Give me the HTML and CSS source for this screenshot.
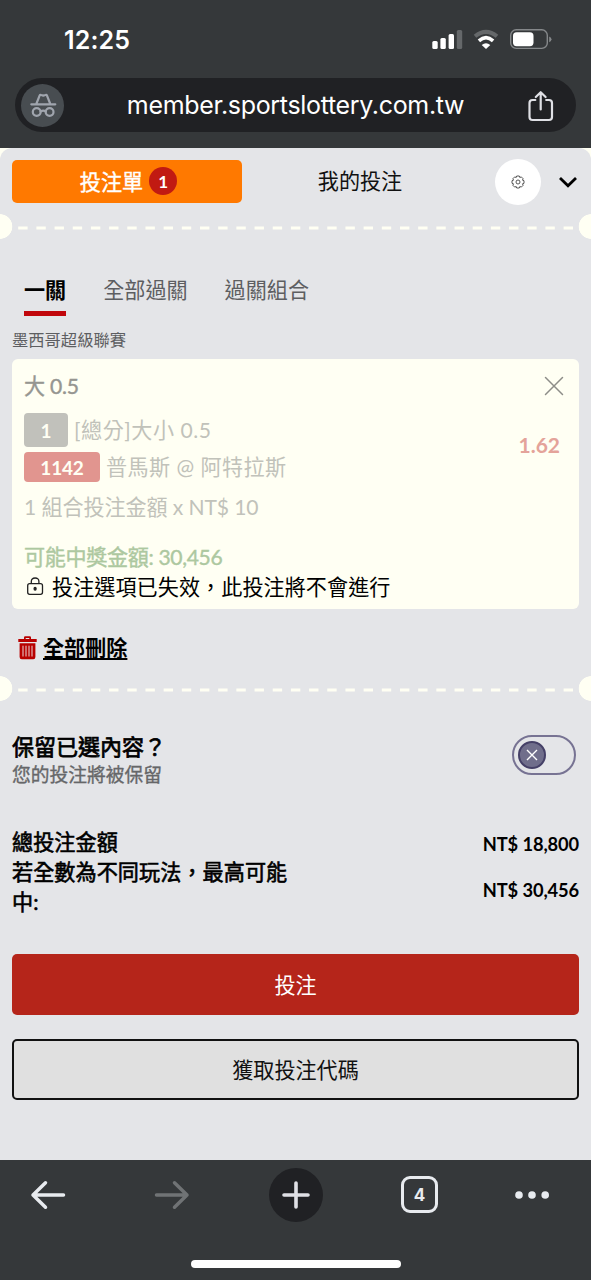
FILE: index.html
```html
<!DOCTYPE html>
<html lang="zh-Hant">
<head>
<meta charset="utf-8">
<title>投注單</title>
<link rel="stylesheet" href="styles.css">
</head>
<body>
<header class="browser-top">
  <div class="status">
    <span class="clock">12:25</span>
    <svg class="status-icons" width="120" height="22" viewBox="432 29 120 22">
      <g fill="#fff"><rect x="432.3" y="41" width="5.4" height="8" rx="1.5"/><rect x="440.4" y="38" width="5.4" height="11" rx="1.5"/><rect x="448.6" y="34" width="5.4" height="15" rx="1.5"/><rect x="456.8" y="30" width="5.4" height="19" rx="1.5" fill="#65686a"/></g>
      <path d="M475 36.3Q486 27.5 497 36.3" fill="none" stroke="#65686a" stroke-width="4"/>
      <path d="M478.9 40.8Q486 34.6 493.1 40.8" fill="none" stroke="#fff" stroke-width="3.6"/>
      <path d="M481.7 45Q486 41.4 490.3 45L486 49z" fill="#fff"/>
      <rect x="510.7" y="29.8" width="36.6" height="18.6" rx="5.5" fill="none" stroke="#85888a" stroke-width="1.4"/>
      <rect x="513" y="32.2" width="20.5" height="14" rx="3.6" fill="#fff"/>
      <path d="M549.2 36.5Q551.5 37.5 551.5 39.3T549.2 42.2z" fill="#85888a"/>
    </svg>
  </div>
  <div class="address">
    <span class="incognito">
      <svg width="28" height="26" viewBox="28 91 28 26" fill="none" stroke="#a0a5ae" stroke-width="2.2" stroke-linecap="round" stroke-linejoin="round">
        <path d="M30.3 103.3H54.3M35.5 102.5L38.6 94.6Q39 93.6 40.2 94L42.3 94.6L44.4 94Q45.6 93.6 46 94.6L49.1 102.5"/><circle cx="35.7" cy="111" r="3.9"/><circle cx="48.6" cy="111" r="3.9"/><path d="M39.6 110.5Q42.2 108.8 44.8 110.5"/>
      </svg>
    </span>
    <span class="url">member.sportslottery.com.tw</span>
    <svg class="share" width="28" height="34" viewBox="527 89 28 34" fill="none" stroke="#dfe0e5" stroke-width="2.2" stroke-linecap="round" stroke-linejoin="round"><path d="M535.3 100H532.5Q529.5 100 529.5 103V117Q529.5 120 532.5 120H549Q552 120 552 117V103Q552 100 549 100H546.2M540.7 109.5V92.5M535.8 97L540.7 92.2L545.6 97"/></svg>
  </div>
</header>

<div class="page">
<main class="slip">
  <div class="switcher">
    <button class="slip-tab">投注單<span class="count">1</span></button>
    <button class="mybets-tab">我的投注</button>
    <span class="gear"><svg width="14" height="14" viewBox="-7 -7 14 14" fill="none" stroke="#444" stroke-width=".9" stroke-linejoin="round"><path d="M-1.3-6H1.3L1.8-4.5L3.3-5.1L5.1-3.3L4.5-1.8L6-1.3V1.3L4.5 1.8L5.1 3.3L3.3 5.1L1.8 4.5L1.3 6H-1.3L-1.8 4.5L-3.3 5.1L-5.1 3.3L-4.5 1.8L-6 1.3V-1.3L-4.5-1.8L-5.1-3.3L-3.3-5.1L-1.8-4.5Z"/><circle r="2"/></svg></span>
    <svg class="chevron" width="20" height="14" viewBox="0 0 20 14" fill="none" stroke="#000" stroke-width="2.8"><path d="M2 3L10 10.7L18 3"/></svg>
  </div>
  <div class="perforation"><svg width="567" height="4"><path d="M6.2 2H564" stroke="#fffff3" stroke-width="3.2" stroke-dasharray="9.4 8.78"/></svg></div>

  <nav class="modes"><span class="mode active">一關</span><span class="mode">全部過關</span><span class="mode">過關組合</span></nav>
  <div class="league">墨西哥超級聯賽</div>
  <section class="bet">
    <div class="bet-title"><span>大 0.5</span><svg width="20" height="20" viewBox="0 0 20 20" stroke="#8d8d88" stroke-width="1.5" stroke-linecap="round"><path d="M1.5 1.5L18.5 18.5M18.5 1.5L1.5 18.5"/></svg></div>
    <div class="bet-body">
      <div class="details">
        <div class="market"><b class="tag grey">1</b><span>[總分]大小 0.5</span></div>
        <div class="match"><b class="tag red">1142</b><span>普馬斯 @ 阿特拉斯</span></div>
        <div class="stake">1 組合投注金額 x NT$ 10</div>
      </div>
      <div class="odds">1.62</div>
    </div>
    <div class="payout">可能中獎金額: 30,456</div>
    <div class="notice"><svg width="18" height="20" viewBox="0 0 18 20" fill="none" stroke="#222" stroke-width="1.3"><rect x="1.7" y="7.7" width="14.8" height="10.6" rx="2"/><path d="M5.3 7.5V5.5Q5.3 2 9.1 2T12.9 5.5V7.5"/><ellipse cx="9.1" cy="12.8" rx="1" ry="1.4" fill="#222"/></svg><span>投注選項已失效，此投注將不會進行</span></div>
  </section>
  <div class="clear"><svg width="19" height="24" viewBox="0 0 19 24" fill="#b80000"><path fill-rule="evenodd" d="M6 3V1.5Q6 .3 7.2 .3H11.8Q13 .3 13 1.5V3H18.7V6H.3V3ZM7.7 3H11.3V1.9H7.7ZM1.6 7.3H17.4V21Q17.4 23.2 15.2 23.2H3.8Q1.6 23.2 1.6 21Z"/><path d="M5 9.7V20.5M8 9.7V20.5M11 9.7V20.5M14 9.7V20.5" stroke="#e8d4d6" stroke-width="1"/></svg><a>全部刪除</a></div>
  <div class="perforation second"><svg width="567" height="4"><path d="M6.2 2H564" stroke="#fffff3" stroke-width="3.2" stroke-dasharray="9.4 8.78"/></svg></div>

  <div class="keep">
    <div><div class="keep-title">保留已選內容？</div><div class="keep-sub">您的投注將被保留</div></div>
    <span class="toggle"><span class="knob"><svg width="12" height="12" viewBox="0 0 12 12" stroke="#fff" stroke-width="1.4"><path d="M1 1L11 11M11 1L1 11"/></svg></span></span>
  </div>
  <div class="total"><span>總投注金額</span><span class="amount">NT$ 18,800</span></div>
  <div class="total maximum"><span class="total-label">若全數為不同玩法，最高可能中:</span><span class="amount">NT$ 30,456</span></div>
  <button class="action primary">投注</button>
  <button class="action secondary">獲取投注代碼</button>
</main>
</div>

<footer class="browser-bottom">
  <div class="tools">
    <span class="tool"><svg width="36" height="30" viewBox="0 0 36 30" fill="none" stroke="#e8ebef" stroke-width="3.5" stroke-linecap="round" stroke-linejoin="round"><path d="M33.5 15H3M15.5 2.8L3 15L15.5 27.2"/></svg></span>
    <span class="tool"><svg width="36" height="30" viewBox="0 0 36 30" fill="none" stroke="#707375" stroke-width="3.5" stroke-linecap="round" stroke-linejoin="round"><path d="M2.5 15H33M20.5 2.8L33 15L20.5 27.2"/></svg></span>
    <span class="tool"><span class="new-tab"><svg width="30" height="30" viewBox="0 0 30 30" stroke="#dfe0e5" stroke-width="3.6" stroke-linecap="round"><path d="M3 15H27M15 3V27"/></svg></span></span>
    <span class="tool"><span class="tab-count">4</span></span>
    <span class="tool"><svg width="36" height="10" viewBox="0 0 36 10" fill="#e8ebef"><circle cx="5" cy="5" r="3.8"/><circle cx="18" cy="5" r="3.8"/><circle cx="31.2" cy="5" r="3.8"/></svg></span>
  </div>
  <div class="home"></div>
</footer>
</body>
</html>
```
FILE: styles.css
```css
* { box-sizing: border-box; }
body { margin: 0; width: 591px; height: 1280px; overflow: hidden; display: flex; flex-direction: column; background: #35383a; font-family: Lato, "Noto Sans CJK TC", sans-serif; font-size: 21.1px; color: #000; white-space: nowrap; }
button { font: inherit; border: 0; padding: 0; margin: 0; display: flex; align-items: center; justify-content: center; }
svg { display: block; flex: none; }

.browser-top { height: 148px; background: #35383a; flex: none; }
.status { height: 78px; padding: 0 39px 0 64px; display: flex; justify-content: space-between; align-items: center; }
.clock { color: #fff; font: 600 25px/30px Inter, sans-serif; letter-spacing: .15px; padding-top: 2px; }
.status-icons { margin-top: 2px; }
.address { height: 54px; margin: 0 15px; padding: 0 21px 0 6px; border-radius: 27px; background: #202124; display: flex; align-items: center; justify-content: space-between; }
.incognito { width: 43px; height: 43px; border-radius: 50%; background: #484d51; display: flex; align-items: center; justify-content: center; }
.url { color: #fff; font: 400 25px/30px Inter, sans-serif; letter-spacing: -.33px; }
.share { margin-top: 2px; }

.page { height: 1012px; flex: none; background: #fffff3; }
.slip { height: 1012px; padding: 11px 12px 0; background: #e4e5e8; border-radius: 12px 12px 0 0; overflow: hidden; }
.switcher { height: 45px; display: flex; align-items: center; }
.slip-tab { width: 230px; height: 43px; padding: 0 0 2px 3px; border-radius: 5px; background: #ff7900; color: #fff; gap: 6px; -webkit-text-stroke: .4px; }
.count { width: 28px; height: 28px; margin-top: 1px; border-radius: 50%; background: #c11a12; font-size: 17px; font-weight: 700; display: flex; align-items: center; justify-content: center; -webkit-text-stroke: 0; }
.mybets-tab { width: 236px; padding-bottom: 3px; background: none; color: #111; }
.gear { width: 46px; height: 46px; border-radius: 50%; background: #fff; margin-left: 17px; display: flex; flex: none; align-items: center; justify-content: center; }
.chevron { margin-left: 17px; }

.perforation { height: 25px; margin: 10px -12px 0; display: flex; align-items: center; justify-content: center; padding-top: 2px; background: radial-gradient(circle at 0 50%, #fffff3 12px, transparent 12.6px), radial-gradient(circle at 100% 50%, #fffff3 12px, transparent 12.6px); }
.second { margin-top: 13px; }

.modes { height: 77px; padding: 36px 12px 0; display: flex; gap: 37px; color: #5d5e61; }
.mode { height: 41px; line-height: 30px; }
.active { color: #000; font-weight: 700; border-bottom: 5px solid #c1070c; }
.league { margin-top: 12px; height: 31px; font-size: 16.3px; line-height: 24px; color: #5d5e61; }

.bet { height: 250px; padding: 12px 12px 0; border-radius: 6px; background: #fffff3; }
.bet-title { height: 30px; padding-right: 3px; display: flex; justify-content: space-between; align-items: center; color: #969691; }
.bet-title span { margin-top: -3px; letter-spacing: -.25px; -webkit-text-stroke: .4px; }
.bet-body { display: flex; justify-content: space-between; padding: 12px 7px 0 0; height: 140px; color: #c1c2ba; }
.market, .match { display: flex; align-items: center; gap: 6px; letter-spacing: .45px; }
.market > span, .match > span { margin-top: -2px; }
.market { height: 34px; letter-spacing: .55px; }
.match { height: 30px; margin-top: 5px; }
.tag { display: flex; align-items: center; justify-content: center; color: #fffff3; border-radius: 4px; font-size: 19px; letter-spacing: -.2px; }
.grey { width: 44px; height: 34px; background: #c1c1bb; }
.red { width: 76px; height: 30px; background: #e1958f; }
.stake { margin-top: 10px; line-height: 30px; letter-spacing: -.1px; }
.odds { margin-top: 17px; line-height: 30px; height: 30px; color: #e4a39a; font-weight: 700; font-size: 21px; }
.payout { margin-top: 2px; line-height: 28px; color: #adc8a0; letter-spacing: -.35px; -webkit-text-stroke: .4px; }
.notice { height: 30px; padding-left: 2px; display: flex; align-items: center; gap: 8px; letter-spacing: .06px; }
.notice span { margin-top: -1px; }

.clear { height: 31px; margin-top: 23px; padding-left: 6px; display: flex; align-items: center; gap: 6px; font-weight: 700; }
.clear a { margin-top: -2px; text-decoration: underline; text-decoration-thickness: 2px; text-underline-offset: 2px; }

.keep { height: 60px; margin-top: 30px; padding-right: 3px; display: flex; justify-content: space-between; }
.keep-title { font-size: 22px; line-height: 31px; -webkit-text-stroke: .75px; }
.keep-sub { font-size: 18.75px; line-height: 25px; color: #666769; -webkit-text-stroke: .35px; }
.toggle { width: 64px; height: 40px; margin-top: 4px; padding-left: 4px; border: 2px solid #777393; border-radius: 20px; display: flex; align-items: center; }
.knob { width: 28px; height: 28px; border-radius: 50%; border: 2px solid #454067; background: #706e8b; display: flex; align-items: center; justify-content: center; }
.total { height: 30px; margin-top: 36px; display: flex; justify-content: space-between; align-items: center; line-height: 30px; -webkit-text-stroke: .6px; letter-spacing: .08px; }
.maximum { height: 60px; margin-top: 0; }
.total-label { width: 280px; white-space: normal; }
.amount { margin-top: 4px; font-size: 18.3px; font-weight: 700; letter-spacing: -.12px; -webkit-text-stroke: 0; }
.maximum .amount { margin-top: 5px; }
.action { width: 567px; height: 61px; padding-bottom: 2px; border-radius: 5px; }
.primary { margin-top: 37px; background: #b5251a; color: #fff; }
.secondary { margin-top: 24px; background: #e0e0e0; color: #111; border: 2px solid #111; }

.browser-bottom { height: 120px; flex: none; background: #35383a; }
.tools { height: 69px; margin: 0 -14px; display: grid; grid-template-columns: 124px 124px 123px 125px 99px; justify-content: start; }
.tool { display: flex; align-items: center; justify-content: center; }
.new-tab { width: 54px; height: 54px; border-radius: 50%; background: #202124; display: flex; align-items: center; justify-content: center; }
.tab-count { width: 37px; height: 37px; border: 3px solid #e8ebef; border-radius: 9px; color: #e8ebef; font: 700 17px Inter, sans-serif; display: flex; align-items: center; justify-content: center; }
.home { width: 210px; height: 8px; border-radius: 4px; margin: 31px auto 0; background: #fff; }
```
